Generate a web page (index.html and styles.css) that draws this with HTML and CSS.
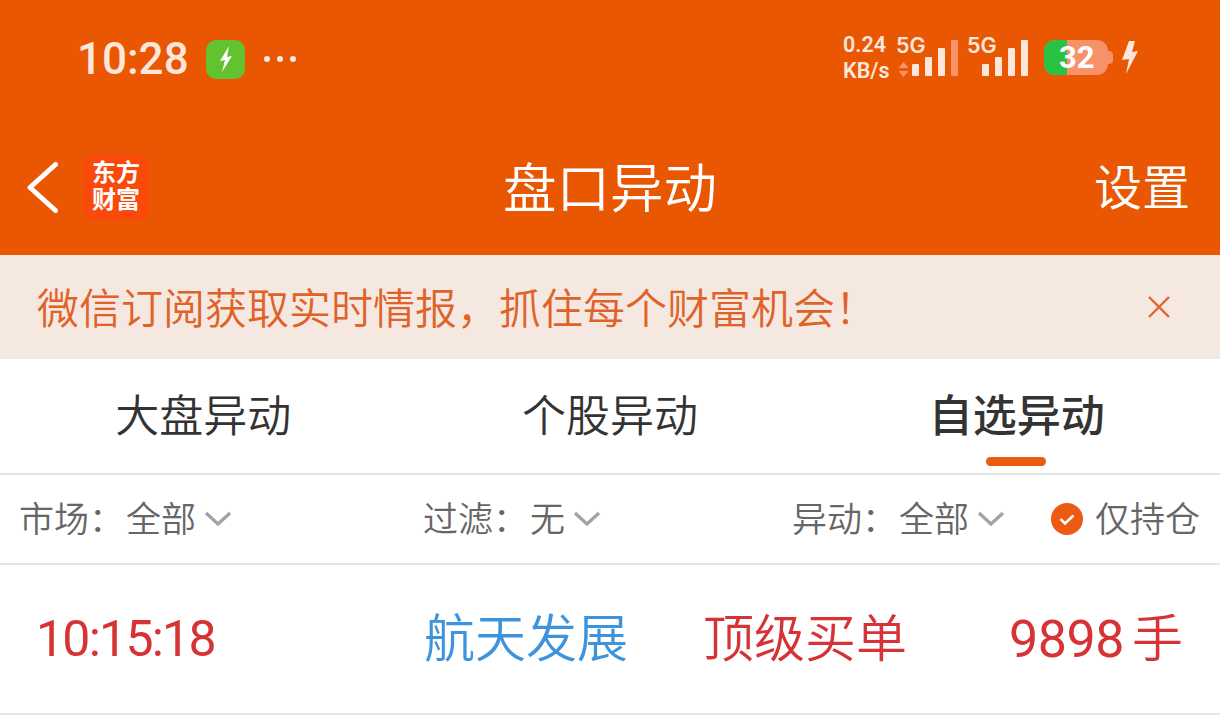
FILE: index.html
```html
<!DOCTYPE html>
<html lang="zh-CN">
<head>
    <meta charset="UTF-8">
    <meta name="viewport" content="width=device-width, initial-scale=1.0">
    <title>盘口异动</title>
    <link rel="stylesheet" href="styles.css">
</head>
<body>
<div class="header">
    <div class="status-bar">
        <div class="status-left">
            <span class="clock">10:28</span>
            <span class="charge-app">
                <svg width="16" height="26" viewBox="0 0 16 26"><path d="M11 0 2 15l5-1-3 12 10-16-5 1z" fill="#fff"/></svg>
            </span>
            <span class="status-dots"><i></i><i></i><i></i></span>
        </div>
        <div class="status-right">
            <div class="net-speed"><span>0.24</span><span>KB/s</span></div>
            <div class="signal-group">
                <span class="net-label">5G</span>
                <svg class="updown" width="11" height="15" viewBox="0 0 11 15"><path d="M5.500 0l5 6H.5zM5.500 15l5-6H.5z" fill="#f7926a"/></svg>
                <div class="bars">
                    <i class="b1"></i><i class="b2"></i><i class="b3"></i><i class="b4 dim"></i>
                </div>
            </div>
            <div class="signal-group second">
                <span class="net-label">5G</span>
                <div class="bars">
                    <i class="b1"></i><i class="b2"></i><i class="b3"></i><i class="b4"></i>
                </div>
            </div>
            <div class="battery">
                <div class="battery-body">
                    <div class="battery-fill"></div>
                    <span class="battery-num">32</span>
                </div>
                <div class="battery-tip"></div>
            </div>
            <svg class="bolt" width="16" height="33" viewBox="0 0 16 33"><path d="M7 0h6l-3 11 6-1L4 33l3-15-7 1z" fill="#fde6da"/></svg>
        </div>
    </div>
    <div class="nav-bar">
        <div class="nav-left">
            <svg width="36" height="56" viewBox="0 0 36 56"><path d="M31.500 2.500 6 25.500l25.500 23" fill="none" stroke="#fff" stroke-width="5" stroke-linecap="round" stroke-linejoin="round"/></svg>
            <div class="logo"><span>东方</span><span>财富</span></div>
        </div>
        <div class="nav-title">盘口异动</div>
        <div class="nav-action">设置</div>
    </div>
</div>

<div class="notice">
    <span class="notice-text">微信订阅获取实时情报，抓住每个财富机会！</span>
    <svg width="24" height="24" viewBox="0 0 24 24"><path d="M2 2l20 20M22 2 2 22" stroke="#e8612a" stroke-width="2.4" fill="none"/></svg>
</div>

<div class="tabs">
    <div class="tab">大盘异动</div>
    <div class="tab">个股异动</div>
    <div class="tab active">自选异动</div>
</div>

<div class="filters">
    <div class="filter filter-market">市场：<span class="filter-value">全部</span><svg class="caret" width="28" height="16" viewBox="0 0 28 16"><path d="M2 2l12 11L26 2" fill="none" stroke="#a3a3a3" stroke-width="3.4"/></svg></div>
    <div class="filter filter-mode">过滤：<span class="filter-value">无</span><svg class="caret" width="28" height="16" viewBox="0 0 28 16"><path d="M2 2l12 11L26 2" fill="none" stroke="#a3a3a3" stroke-width="3.4"/></svg></div>
    <div class="filter filter-type">异动：<span class="filter-value">全部</span><svg class="caret" width="28" height="16" viewBox="0 0 28 16"><path d="M2 2l12 11L26 2" fill="none" stroke="#a3a3a3" stroke-width="3.4"/></svg></div>
    <div class="filter filter-hold">
        <svg width="32" height="32" viewBox="0 0 32 32"><circle cx="16" cy="16" r="16" fill="#ec5a14"/><path d="M9.500 16l4.500 4.500 8.500-8" fill="none" stroke="#fff" stroke-width="2.600"/></svg>
        仅持仓
    </div>
</div>

<div class="row">
    <span class="row-time">10:15:18</span>
    <span class="row-name">航天发展</span>
    <span class="row-type">顶级买单</span>
    <span class="row-vol">9898<span class="row-unit">手</span></span>
</div>
</body>
</html>
```

FILE: styles.css
```css
* {
    margin: 0;
    padding: 0;
    box-sizing: border-box;
    font-family: Roboto, "Noto Sans CJK SC", sans-serif;
}

body {
    width: 1220px;
    height: 728px;
    overflow: hidden;
    background-color: white;
}

.header {
    height: 255px;
    background-color: #e95703;
    color: white;
}

.status-bar {
    height: 125px;
    display: flex;
    justify-content: space-between;
    align-items: flex-start;
    padding: 32px 82px 0 77px;
}

.status-left {
    display: flex;
    align-items: center;
    height: 54px;
}

.clock {
    font-size: 44px;
    font-weight: 500;
    color: #fde6da;
    width: 129px;
}

.charge-app {
    width: 39px;
    height: 39px;
    border-radius: 10px;
    background-color: #62c22f;
    display: flex;
    align-items: center;
    justify-content: center;
}

.status-dots {
    display: flex;
    gap: 7px;
    margin-left: 19px;
}

.status-dots i {
    width: 6px;
    height: 6px;
    border-radius: 50%;
    background-color: #fde6da;
}

.status-right {
    display: flex;
    align-items: flex-start;
    color: #fde6da;
}

.net-speed {
    display: flex;
    flex-direction: column;
    font-family: Inter, sans-serif;
    font-size: 21.500px;
    font-weight: 600;
    line-height: 26px;
    width: 53px;
    white-space: nowrap;
}

.signal-group {
    position: relative;
    width: 71px;
    height: 44px;
}

.signal-group.second {
    width: 61px;
}

.net-label {
    position: absolute;
    top: 0;
    left: 0;
    font-family: Inter, sans-serif;
    font-size: 21.500px;
    font-weight: 600;
    line-height: 26px;
}

.updown {
    position: absolute;
    left: 2px;
    top: 30px;
}

.bars {
    position: absolute;
    right: 9px;
    bottom: 0;
    display: flex;
    align-items: flex-end;
    gap: 5.5px;
}

.second .bars {
    right: 0;
}

.bars i {
    width: 7.5px;
    background-color: #fde6da;
    border-radius: 1px;
}

.bars .b1 { height: 12px; }
.bars .b2 { height: 19px; }
.bars .b3 { height: 28px; }
.bars .b4 { height: 36px; }
.bars .dim { background-color: #f7926a; }

.battery {
    display: flex;
    align-items: center;
    margin: 8px 0 0 16px;
}

.battery-body {
    position: relative;
    width: 64px;
    height: 35px;
    border-radius: 11px;
    background-color: #f6916a;
}

.battery-fill {
    width: 23px;
    height: 100%;
    border-radius: 11px 0 0 11px;
    background-color: #28c244;
}

.battery-num {
    position: absolute;
    left: 15px;
    top: 0;
    font-size: 31px;
    font-weight: 700;
    line-height: 35px;
    color: white;
}

.battery-tip {
    width: 5px;
    height: 13px;
    border-radius: 0 4px 4px 0;
    background-color: #f6916a;
}

.bolt {
    margin: 9px 0 0 9px;
}

.nav-bar {
    height: 130px;
    display: flex;
    align-items: center;
    justify-content: space-between;
    padding: 0 30px 0 24px;
    position: relative;
}

.nav-left {
    display: flex;
    align-items: center;
    gap: 23px;
}

.logo {
    width: 66px;
    height: 66px;
    margin-bottom: 7px;
    border-radius: 11px;
    background-color: #f94a0c;
    display: flex;
    flex-direction: column;
    align-items: center;
    justify-content: center;
    font-size: 24px;
    font-weight: 700;
    line-height: 27px;
}

.nav-title {
    position: absolute;
    left: 503px;
    top: 32px;
    font-size: 53.500px;
    font-weight: 350;
    line-height: 66px;
}

.nav-action {
    font-size: 48px;
    font-weight: 350;
    margin-bottom: 12px;
}

.notice {
    height: 104px;
    background-color: #f5e8e1;
    display: flex;
    align-items: center;
    justify-content: space-between;
    padding: 0 49px 0 37px;
    color: #df6228;
}

.notice-text {
    font-size: 42px;
    font-weight: 350;
    margin-bottom: 4px;
    white-space: nowrap;
}

.tabs {
    height: 116px;
    display: flex;
    border-bottom: 2px solid #e3e3e3;
}

.tab {
    flex: 1;
    text-align: center;
    font-size: 44px;
    font-weight: 350;
    line-height: 116px;
    color: #333;
    position: relative;
}

.tab.active {
    font-weight: 500;
}

.tab.active::after {
    content: "";
    position: absolute;
    left: 173px;
    bottom: 7px;
    width: 60px;
    height: 9px;
    border-radius: 5px;
    background-color: #eb5a10;
}

.filters {
    height: 90px;
    display: flex;
    align-items: center;
    border-bottom: 2px solid #e6e6e6;
    color: #666;
    font-size: 35px;
    font-weight: 350;
    padding: 0 0 6px 19px;
}

.filter {
    display: flex;
    align-items: center;
    white-space: nowrap;
}

.filter-market { width: 404px; }
.filter-mode { width: 369px; }
.filter-type { width: 259px; }
.filter-hold { gap: 12px; }

.filter-value {
    margin-left: 2px;
}

.caret {
    margin-left: 8px;
    margin-top: 6px;
}

.filter-hold svg {
    margin-top: 6px;
}

.row {
    height: 150px;
    display: flex;
    align-items: center;
    border-bottom: 2px solid #e6e6e6;
    font-size: 51px;
    font-weight: 350;
    color: #d63336;
    white-space: nowrap;
    padding-left: 36px;
}

.row-time {
    width: 388px;
    font-size: 50px;
    font-weight: 400;
    letter-spacing: -1.75px;
}

.row-name { width: 279px; color: #3e94dc; margin-bottom: 8px; }
.row-type { width: 306px; margin-bottom: 8px; }

.row-vol {
    display: flex;
    align-items: center;
    font-size: 52px;
    font-weight: 400;
    letter-spacing: -0.5px;
}

.row-unit {
    font-size: 51px;
    font-weight: 350;
    margin: 0 0 8px 8px;
}
```
